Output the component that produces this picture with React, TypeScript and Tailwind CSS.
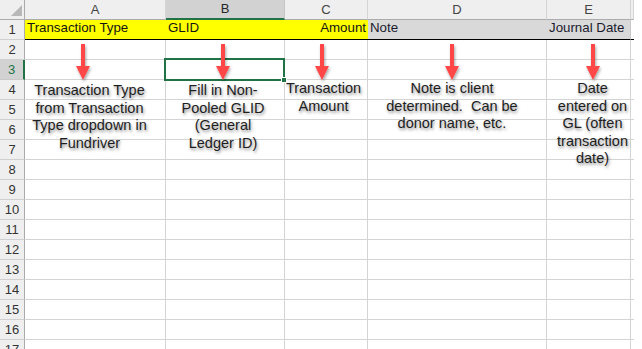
import React from "react";

const cols = ["A", "B", "C", "D", "E", ""];
const rows = Array.from({ length: 17 }, (_, i) => i + 1);

function Arrow({ x }: { x: number }) {
  return (
    <g filter="url(#sh)">
      <path
        d={`M${x - 2} 44 L${x + 2} 44 L${x + 2} 66 L${x + 7} 66 L${x} 80 L${x - 7} 66 L${x - 2} 66 Z`}
        fill="#ff4646"
      />
    </g>
  );
}

function Note({ left, top, width, lines }: { left: number; top: number; width: number; lines: string[] }) {
  return (
    <div
      className="absolute text-center whitespace-pre text-[14.5px] leading-[17.5px] text-[#1e1e1e] [font-family:'Liberation_Sans',Arial,sans-serif] [text-shadow:1px_2px_3px_rgba(0,0,0,0.45)]"
      style={{ left, top, width }}
    >
      {lines.map((l, i) => (
        <div key={i}>{l}</div>
      ))}
    </div>
  );
}

export default function App() {
  return (
    <div className="relative w-[642px] h-[349px] overflow-hidden bg-white [font-family:'Liberation_Sans',Arial,sans-serif]">
      <div className="grid grid-cols-[25px_141px_119px_83px_179px_84px_3px] w-[633px]">
        {/* corner */}
        <div className="relative h-[20px] bg-[#efefef] border-r border-b border-[#ababab]">
          <svg className="absolute left-0 top-0" width="24" height="19">
            <polygon points="22,5 22,16 11,16" fill="#b8b8b8" />
          </svg>
        </div>
        {cols.map((c, i) =>
          c === "B" ? (
            <div
              key={i}
              className="h-[20px] bg-[#d2d2d2] border-r border-[#c6c6c6] border-b-2 border-b-[#217346] flex items-center justify-center text-[13px] text-[#262626]"
            >
              {c}
            </div>
          ) : (
            <div
              key={i}
              className="h-[20px] bg-[#efefef] border-r border-[#d4d4d4] border-b border-b-[#ababab] flex items-center justify-center text-[13px] text-[#444]"
            >
              {c}
            </div>
          )
        )}
        {rows.map((r) => (
          <React.Fragment key={r}>
            {r === 3 ? (
              <div className="h-[20px] bg-[#d2d2d2] border-r-2 border-r-[#217346] border-b border-b-[#c8c8c8] flex items-center justify-center text-[13px] text-[#217346]">
                {r}
              </div>
            ) : (
              <div className="h-[20px] bg-[#efefef] border-r border-r-[#ababab] border-b border-b-[#d0d0d0] flex items-center justify-center text-[13px] text-[#333]">
                {r}
              </div>
            )}
            {r === 1 ? (
              <>
                <div className="h-[20px] bg-[#ffff00] border-b border-b-black flex items-end pl-[2px] pb-[1px] text-[13.3px] text-[#141414] whitespace-nowrap">
                  Transaction Type
                </div>
                <div className="h-[20px] bg-[#ffff00] border-b border-b-black flex items-end pl-[2px] pb-[1px] text-[13.3px] text-[#141414]">
                  GLID
                </div>
                <div className="h-[20px] bg-[#ffff00] border-b border-b-black flex items-end justify-end pr-[2px] pb-[1px] text-[13.3px] text-[#141414]">
                  Amount
                </div>
                <div className="h-[20px] bg-[#d9d9d9] border-b border-b-black flex items-end pl-[2px] pb-[1px] text-[13.3px] text-[#1a1a2e]">
                  Note
                </div>
                <div className="h-[20px] bg-[#d9d9d9] border-r border-r-[#c8c8c8] border-b border-b-black flex items-end pl-[2px] pb-[1px] text-[13.3px] text-[#1a1a2e] whitespace-nowrap">
                  Journal Date
                </div>
                <div className="h-[20px] border-b border-b-black" />
              </>
            ) : (
              <>
                <div className="h-[20px] border-r border-b border-[#d4d4d4]" />
                <div className="h-[20px] border-r border-b border-[#d4d4d4]" />
                <div className="h-[20px] border-r border-b border-[#d4d4d4]" />
                <div className="h-[20px] border-r border-b border-[#d4d4d4]" />
                <div className="h-[20px] border-r border-b border-[#d4d4d4]" />
                <div className="h-[20px] border-b border-[#d4d4d4]" />
              </>
            )}
          </React.Fragment>
        ))}
      </div>

      {/* selected cell B3 */}
      <div className="absolute left-[164px] top-[58px] w-[121px] h-[23px] border-2 border-[#217346]" />
      <div className="absolute left-[281px] top-[77px] w-[6px] h-[6px] bg-[#217346] border border-white" />

      {/* arrows */}
      <svg className="absolute left-0 top-0 pointer-events-none" width="642" height="349">
        <defs>
          <filter id="sh" x="-50%" y="-20%" width="200%" height="160%">
            <feDropShadow dx="1" dy="2" stdDeviation="1.5" floodColor="#000" floodOpacity="0.35" />
          </filter>
        </defs>
        <Arrow x={83} />
        <Arrow x={223} />
        <Arrow x={322} />
        <Arrow x={452} />
        <Arrow x={593} />
      </svg>

      {/* notes */}
      <Note left={24} top={82} width={131} lines={["Transaction Type", "from Transaction", "Type dropdown in", "Fundriver"]} />
      <Note left={173} top={82} width={100} lines={["Fill in Non-", "Pooled GLID", "(General", "Ledger ID)"]} />
      <Note left={283} top={80} width={81} lines={["Transaction", "Amount"]} />
      <Note left={372} top={80} width={160} lines={["Note is client", "determined.  Can be", "donor name, etc."]} />
      <Note left={553} top={80} width={79} lines={["Date", "entered on", "GL (often", "transaction", "date)"]} />
    </div>
  );
}
